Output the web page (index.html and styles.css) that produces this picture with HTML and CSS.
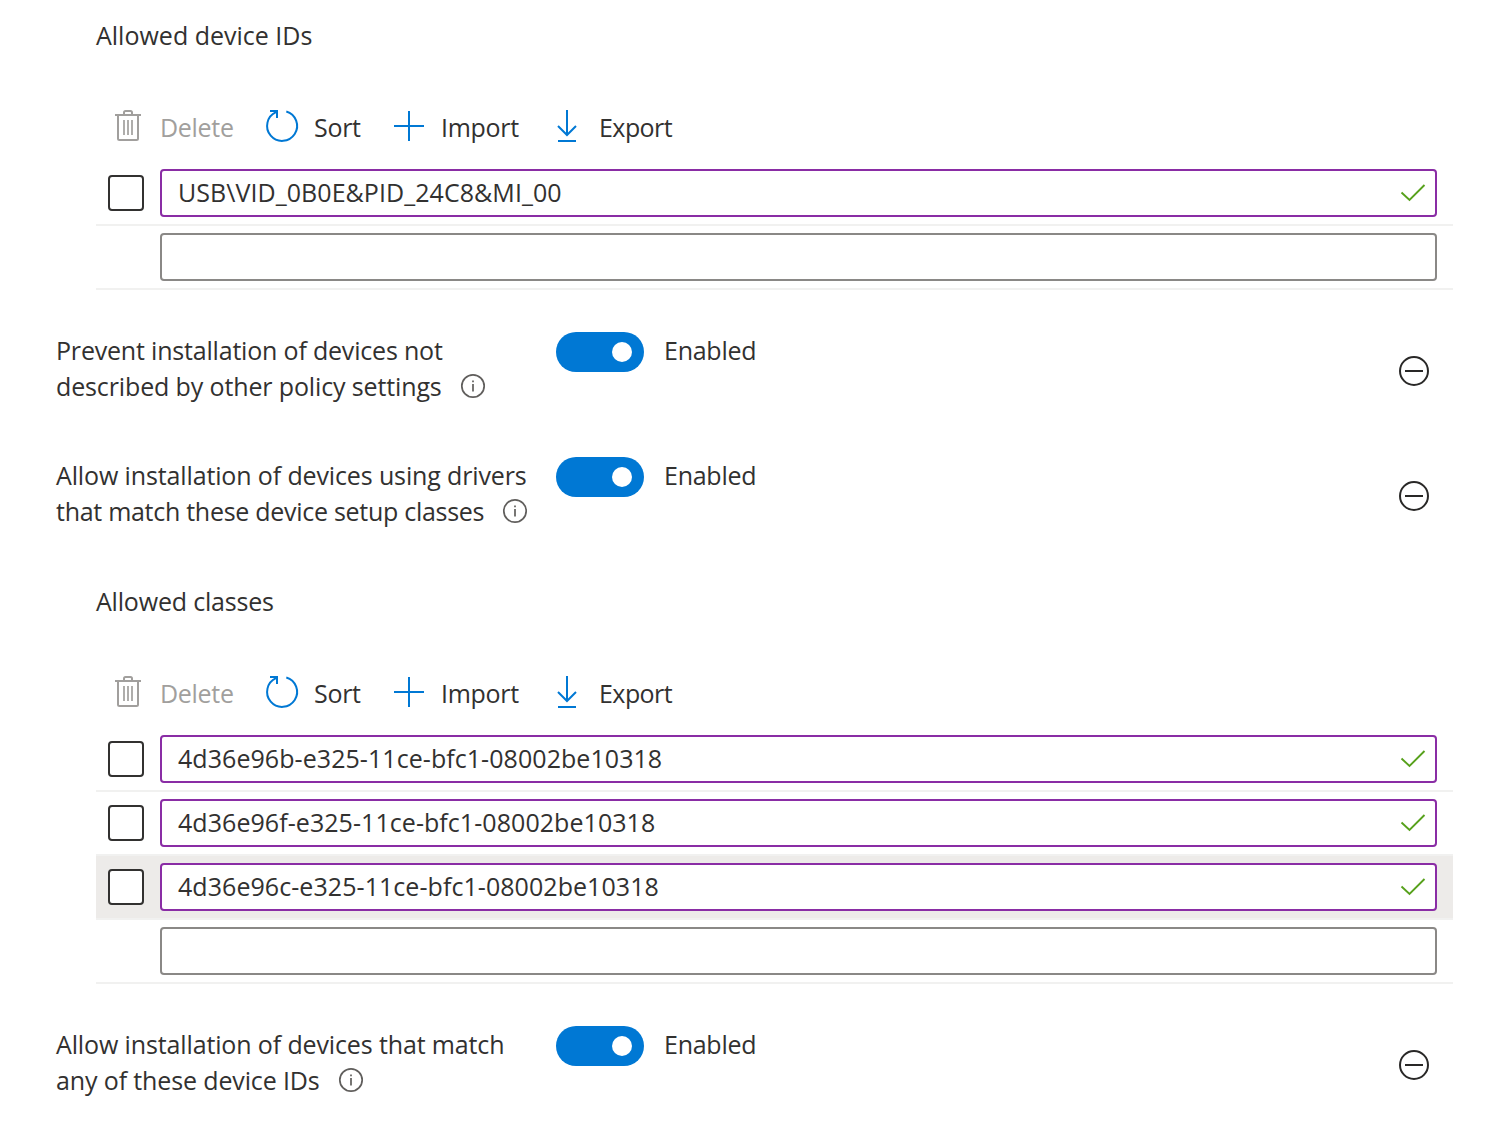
FILE: index.html
```html
<!DOCTYPE html>
<html lang="en">
<head>
<meta charset="utf-8">
<title>Device installation policy</title>
<link rel="stylesheet" href="styles.css">
</head>
<body>
<svg class="defs" width="0" height="0" aria-hidden="true">
  <symbol id="trash" viewBox="0 0 32 34"><g fill="none" stroke="#a19f9d" stroke-width="2"><path d="M3 6H29M6 6V29.500Q6 31 7.500 31H24.500Q26 31 26 29.500V6M12 6V3.500Q12 2 13.500 2H18.500Q20 2 20 3.500V6"/><path d="M12 11V26M16 11V26M20 11V26" stroke-width="1.700"/></g></symbol>
  <symbol id="sort" viewBox="0 0 36 36"><g fill="none" stroke="#0078d4" stroke-width="2"><path d="M22.300 3.500A15 15 0 1 1 12 4.200M6 3H13V10"/></g></symbol>
  <symbol id="plus" viewBox="0 0 34 34"><path d="M17 2V32M2 17H32" fill="none" stroke="#0078d4" stroke-width="2"/></symbol>
  <symbol id="download" viewBox="0 0 34 34"><path d="M17 1V26M8 17L17 26L26 17M8 32H26" fill="none" stroke="#0078d4" stroke-width="2"/></symbol>
  <symbol id="check" viewBox="0 0 26 20"><path d="M1.500 9.500L9.500 17L24.500 2" fill="none" stroke="#57a11c" stroke-width="1.900"/></symbol>
  <symbol id="info" viewBox="0 0 26 26"><circle cx="13" cy="13" r="11.200" fill="none" stroke="#605e5c" stroke-width="1.700"/><path d="M13 11V18.500M13 7.500V9.300" stroke="#605e5c" stroke-width="1.700"/></symbol>
  <symbol id="minus" viewBox="0 0 32 32"><circle cx="16" cy="16" r="14" fill="none" stroke="#292827" stroke-width="2"/><path d="M7 16H25" stroke="#292827" stroke-width="2"/></symbol>
</svg>
<main class="policy">
  <section class="list">
    <h2 class="title">Allowed device IDs</h2>
    <div class="toolbar">
      <div class="tool delete"><svg class="trash"><use href="#trash"/></svg><span>Delete</span></div>
      <div class="tool sort"><svg class="spin"><use href="#sort"/></svg><span>Sort</span></div>
      <div class="tool import"><svg><use href="#plus"/></svg><span>Import</span></div>
      <div class="tool export"><svg><use href="#download"/></svg><span>Export</span></div>
    </div>
    <div class="row"><i class="box"></i><div class="field valid"><span>USB\VID_0B0E&amp;PID_24C8&amp;MI_00</span><svg class="check"><use href="#check"/></svg></div></div>
    <div class="row"><div class="field"></div></div>
  </section>
  <section class="setting">
    <div class="label"><span class="tighter">Prevent installation of devices not</span><br><span class="tight">described by other policy settings</span><svg class="info"><use href="#info"/></svg></div>
    <div class="toggle"><i class="knob"></i></div><span class="state">Enabled</span>
    <svg class="remove"><use href="#minus"/></svg>
  </section>
  <section class="setting">
    <div class="label"><span class="tight">Allow installation of devices using drivers</span><br><span class="tightest">that match these device setup classes</span><svg class="info"><use href="#info"/></svg></div>
    <div class="toggle"><i class="knob"></i></div><span class="state">Enabled</span>
    <svg class="remove"><use href="#minus"/></svg>
  </section>
  <section class="list">
    <h2 class="title tighter">Allowed classes</h2>
    <div class="toolbar">
      <div class="tool delete"><svg class="trash"><use href="#trash"/></svg><span>Delete</span></div>
      <div class="tool sort"><svg class="spin"><use href="#sort"/></svg><span>Sort</span></div>
      <div class="tool import"><svg><use href="#plus"/></svg><span>Import</span></div>
      <div class="tool export"><svg><use href="#download"/></svg><span>Export</span></div>
    </div>
    <div class="row"><i class="box"></i><div class="field valid"><span>4d36e96b-e325-11ce-bfc1-08002be10318</span><svg class="check"><use href="#check"/></svg></div></div>
    <div class="row"><i class="box"></i><div class="field valid"><span>4d36e96f-e325-11ce-bfc1-08002be10318</span><svg class="check"><use href="#check"/></svg></div></div>
    <div class="row hover"><i class="box"></i><div class="field valid"><span>4d36e96c-e325-11ce-bfc1-08002be10318</span><svg class="check"><use href="#check"/></svg></div></div>
    <div class="row"><div class="field"></div></div>
  </section>
  <section class="setting">
    <div class="label"><span class="tight">Allow installation of devices that match</span><br><span class="tight">any of these device IDs</span><svg class="info"><use href="#info"/></svg></div>
    <div class="toggle"><i class="knob"></i></div><span class="state">Enabled</span>
    <svg class="remove"><use href="#minus"/></svg>
  </section>
</main>
</body>
</html>
```

FILE: styles.css
```css
* { box-sizing: border-box; }
body { margin: 0; background: #fff; color: #323130; font: 25px/36px "Open Sans", "Noto Sans", sans-serif; }
.defs { position: absolute; }
svg { display: block; flex: none; }
.policy { padding: 17px 45px 0 56px; }
.list { margin-left: 40px; }
.title { margin: 0 0 37px; font: inherit; }
.tight { letter-spacing: -0.13px; }
.tighter { letter-spacing: -0.19px; }
.tightest { letter-spacing: -0.28px; }
.toolbar { display: flex; align-items: center; height: 72px; padding-left: 16px; }
.tool { display: flex; align-items: center; letter-spacing: -0.3px; }
.tool svg { width: 34px; height: 34px; margin-right: 15px; }
.tool .trash { width: 32px; margin-right: 16px; }
.tool .spin { width: 36px; height: 36px; margin-right: 14px; }
.tool span { padding-top: 2px; }
.delete { width: 152px; color: #a19f9d; }
.sort { width: 128px; }
.import { width: 158px; }
.export { letter-spacing: -0.55px; }
.row { display: flex; align-items: center; justify-content: flex-end; height: 64px; padding: 0 16px 0 12px; border-bottom: 2px solid #f1f1f0; }
.hover { background: #edebe9; }
.box { width: 36px; height: 36px; margin-right: 16px; background: #fff; border: 2px solid #323130; border-radius: 4px; }
.field { display: flex; align-items: center; justify-content: space-between; width: 1277px; height: 48px; padding: 0 9px 0 16px; background: #fff; border: 2px solid #8a8886; border-radius: 4px; letter-spacing: 0.06px; }
.field span { padding-bottom: 2px; }
.valid { border-color: #8a2da5; }
.check { width: 26px; height: 20px; }
.setting { display: flex; align-items: flex-start; height: 125px; }
.list + .setting { margin-top: 42px; }
.setting + .list { margin-top: 1px; }
.label { width: 500px; white-space: nowrap; }
.info { display: inline-block; width: 26px; height: 26px; margin-left: 18px; vertical-align: -3px; }
.toggle { display: flex; align-items: center; justify-content: flex-end; width: 88px; height: 40px; padding-right: 12px; border-radius: 20px; background: #0078d4; }
.knob { width: 20px; height: 20px; border-radius: 50%; background: #fff; }
.state { margin: 0 auto 0 20px; letter-spacing: -0.25px; }
.remove { width: 32px; height: 32px; margin: 23px 23px 0 0; }
```
